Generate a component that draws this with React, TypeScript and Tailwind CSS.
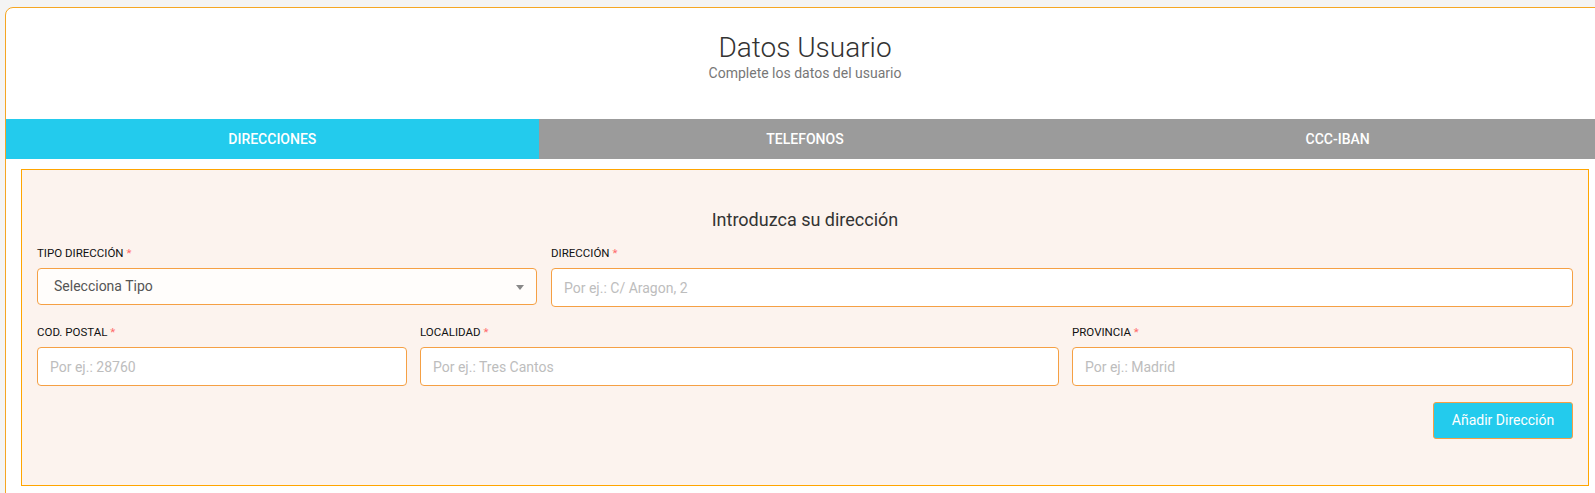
import React from "react";

function Label({ text }: { text: string }) {
  return (
    <label className="block text-[11.5px] leading-[14px] uppercase text-[#111] mb-[8px]">
      {text} <span className="text-[#ff6b6b]">*</span>
    </label>
  );
}

function TextInput({ placeholder }: { placeholder: string }) {
  return (
    <input
      type="text"
      placeholder={placeholder}
      className="w-full h-[39px] bg-white border border-[#f5a044] rounded-[4px] px-[12px] text-[14px] text-[#444] placeholder:text-[#bdbdbd] outline-none"
    />
  );
}

export default function App() {
  return (
    <div
      className="w-[1595px] h-[493px] overflow-hidden bg-[#f4f4f4] pt-[7px] pl-[5px]"
      style={{ fontFamily: "Roboto, 'Noto Sans', sans-serif" }}
    >
      <div className="w-[1600px] h-[600px] bg-white border border-[#f5a623] rounded-tl-[8px] rounded-tr-[8px]">
        <div className="h-[111px] flex flex-col items-center pt-[24px]">
          <h1 className="text-[28px] leading-[32px] font-light text-[#333]">Datos Usuario</h1>
          <p className="text-[14px] leading-[16px] text-[#777] mt-[1px]">Complete los datos del usuario</p>
        </div>
        <div className="grid grid-cols-3 h-[40px]">
          <div className="bg-[#23cbed] text-white text-[14px] font-medium flex items-center justify-center">DIRECCIONES</div>
          <div className="bg-[#9b9b9b] text-white text-[14px] font-medium flex items-center justify-center">TELEFONOS</div>
          <div className="bg-[#9b9b9b] text-white text-[14px] font-medium flex items-center justify-center">CCC-IBAN</div>
        </div>
        <div className="ml-[15px] mt-[10px] w-[1568px] bg-[#fcf3ee] border border-[#ffa500] px-[15px] pt-[38px] pb-[46px]">
          <h2 className="text-center text-[18px] leading-[24px] text-[#333] mb-[14px]">Introduzca su dirección</h2>
          <div className="grid grid-cols-[500px_1fr] gap-x-[14px] items-start">
            <div>
              <Label text="Tipo dirección" />
              <div className="relative h-[37px] bg-[#fffdfb] border border-[#f5a044] rounded-[4px] flex items-center pl-[16px] text-[14px] text-[#555]">
                Selecciona Tipo
                <span className="absolute right-[12px] top-[16px] w-0 h-0 border-l-[4px] border-r-[4px] border-t-[5px] border-l-transparent border-r-transparent border-t-[#888]" />
              </div>
            </div>
            <div>
              <Label text="Dirección" />
              <TextInput placeholder="Por ej.: C/ Aragon, 2" />
            </div>
          </div>
          <div className="grid grid-cols-[370px_639px_1fr] gap-x-[13px] mt-[18px]">
            <div>
              <Label text="Cod. Postal" />
              <TextInput placeholder="Por ej.: 28760" />
            </div>
            <div>
              <Label text="Localidad" />
              <TextInput placeholder="Por ej.: Tres Cantos" />
            </div>
            <div>
              <Label text="Provincia" />
              <TextInput placeholder="Por ej.: Madrid" />
            </div>
          </div>
          <div className="flex justify-end mt-[16px]">
            <button className="w-[140px] h-[37px] bg-[#23cbed] border border-[#f5a044] rounded-[3px] text-white text-[14px]">
              Añadir Dirección
            </button>
          </div>
        </div>
      </div>
    </div>
  );
}
